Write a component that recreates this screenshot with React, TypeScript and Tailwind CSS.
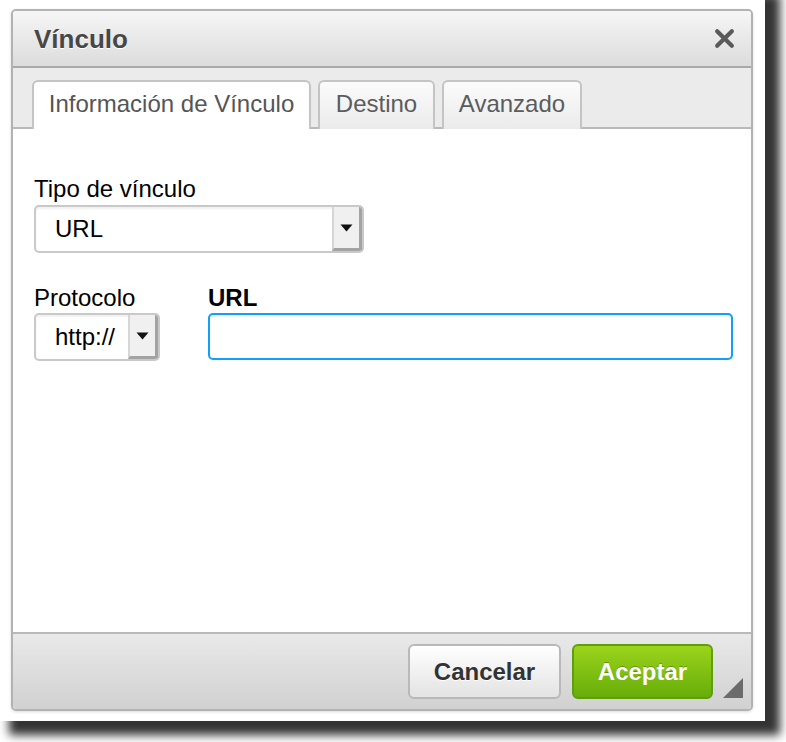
import React from 'react';

const font = { fontFamily: '"Liberation Sans", Arial, Helvetica, sans-serif' };

const Arrow: React.FC = () => (
  <div className="w-[30px] h-full flex items-center justify-center bg-[#f0f0f0] border-l-2 border-l-[#d6d6d6] border-r-[3px] border-r-[#a3a3a3] border-b-[3px] border-b-[#a3a3a3] rounded-r-[3px]">
    <svg width="13" height="8" viewBox="0 0 13 8">
      <polygon points="0.5,0.5 12.5,0.5 6.5,7.5" fill="#111" />
    </svg>
  </div>
);

interface SelectProps {
  value: string;
  width: string;
}

const Select: React.FC<SelectProps> = ({ value, width }) => (
  <div className={`${width} h-[48px] flex border-2 border-[#c9c9c9] rounded-[5px] bg-white shadow-[inset_0_2px_2px_rgba(0,0,0,0.06)]`}>
    <div className="flex-1 flex items-center pl-[19px] text-[24px] leading-[28px] text-black">{value}</div>
    <Arrow />
  </div>
);

const Tab: React.FC<{ label: string; width: string; active?: boolean }> = ({ label, width, active }) => (
  <div
    className={
      active
        ? `${width} relative z-10 h-[49px] mb-[-2px] text-center pt-[8px] rounded-t-[6px] border-2 border-b-0 border-[#c4c4c4] bg-white text-[24px] leading-[28px] text-[#555]`
        : `${width} h-[49px] mb-[-2px] text-center pt-[8px] rounded-t-[6px] border-2 border-b-0 border-[#c4c4c4] bg-gradient-to-b from-[#fbfbfb] to-[#ebebeb] text-[24px] leading-[28px] text-[#5c5c5c]`
    }
  >
    {label}
  </div>
);

export default function App() {
  return (
    <div className="w-[786px] h-[742px] overflow-hidden bg-white" style={font}>
      <div className="ml-[-6px] mt-[-20px] w-[771px] h-[741px] bg-white shadow-[15px_14px_9px_rgba(0,0,0,0.8)] pt-[29px] pl-[17px]">
        <div className="w-[742px] h-[702px] flex flex-col border-2 border-[#b2b2b2] rounded-[5px] overflow-hidden shadow-[0_1px_3px_rgba(0,0,0,0.15)]">
          {/* header */}
          <div className="h-[57px] shrink-0 flex items-center justify-between pl-[21px] pr-[16px] border-b-2 border-[#a9a9a9] bg-gradient-to-b from-[#f6f6f6] to-[#dcdcdc]">
            <span className="text-[26px] leading-[28px] font-bold text-[#474747] [text-shadow:0_1px_0_#fff]">Vínculo</span>
            <svg width="21" height="21" viewBox="0 0 20 20">
              <path d="M3 3 L17 17 M17 3 L3 17" stroke="#5a5a5a" strokeWidth="4" strokeLinecap="round" />
            </svg>
          </div>

          {/* tabs */}
          <div className="h-[61px] shrink-0 flex items-end gap-[7px] pl-[19px] border-b-2 border-[#b9b9b9] bg-[#ebebeb]">
            <Tab label="Información de Vínculo" width="w-[279px]" active />
            <Tab label="Destino" width="w-[117px]" />
            <Tab label="Avanzado" width="w-[140px]" />
          </div>

          {/* body */}
          <div className="flex-1 bg-white px-[21px] pt-[46px]">
            <div className="text-[24px] leading-[28px] text-black">Tipo de vínculo</div>
            <div className="mt-[2px]">
              <Select value="URL" width="w-[330px]" />
            </div>

            <div className="mt-[31px] flex gap-[48px]">
              <div>
                <div className="text-[24px] leading-[28px] text-black">Protocolo</div>
                <div className="mt-[1px]">
                  <Select value="http://" width="w-[126px]" />
                </div>
              </div>
              <div>
                <div className="text-[24px] leading-[28px] font-bold text-black">URL</div>
                <div className="mt-[1px] w-[525px] h-[47px] border-2 border-[#139ff7] rounded-[5px] bg-white shadow-[inset_0_2px_2px_rgba(0,0,0,0.06)]" />
              </div>
            </div>
          </div>

          {/* footer */}
          <div className="relative h-[77px] shrink-0 flex justify-end gap-[11px] pt-[10px] pr-[38px] border-t-2 border-[#b9b9b9] bg-gradient-to-b from-[#e9e9e9] to-[#d1d1d1]">
            <button className="w-[153px] h-[55px] rounded-[6px] border-2 border-[#b9b9b9] bg-gradient-to-b from-white to-[#e3e3e3] text-[24px] font-bold text-[#333] [text-shadow:0_1px_0_#fff]">
              Cancelar
            </button>
            <button className="w-[141px] h-[55px] rounded-[6px] border-2 border-[#5f9f0c] bg-gradient-to-b from-[#9bd41b] to-[#67ad0a] text-[24px] font-bold text-white [text-shadow:0_-1px_0_rgba(0,0,0,0.25)]">
              Aceptar
            </button>
            <svg className="absolute right-[8px] bottom-[11px]" width="20" height="20" viewBox="0 0 20 20">
              <polygon points="20,0 20,20 0,20" fill="#6b6b6b" />
            </svg>
          </div>
        </div>
      </div>
    </div>
  );
}
